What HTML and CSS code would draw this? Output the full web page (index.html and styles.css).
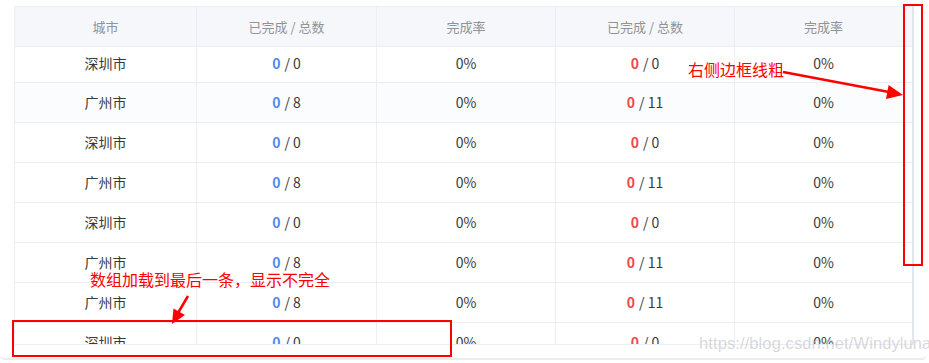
FILE: index.html
```html
<!DOCTYPE html>
<html lang="zh">
<head>
<meta charset="utf-8">
<link rel="stylesheet" href="styles.css">
</head>
<body>
<div class="card">
  <div class="table-wrap">
    <div class="grid">
      <div class="th">城市</div><div class="th">已完成 / 总数</div><div class="th">完成率</div><div class="th">已完成 / 总数</div><div class="th last">完成率</div>

      <div class="td r1">深圳市</div><div class="td r1"><b class="blue">0</b> / 0</div><div class="td r1">0%</div><div class="td r1"><b class="red">0</b> / 0</div><div class="td r1 last">0%</div>

      <div class="td hover">广州市</div><div class="td hover"><b class="blue">0</b> / 8</div><div class="td hover">0%</div><div class="td hover"><b class="red">0</b> / 11</div><div class="td hover last">0%</div>

      <div class="td">深圳市</div><div class="td"><b class="blue">0</b> / 0</div><div class="td">0%</div><div class="td"><b class="red">0</b> / 0</div><div class="td last">0%</div>

      <div class="td">广州市</div><div class="td"><b class="blue">0</b> / 8</div><div class="td">0%</div><div class="td"><b class="red">0</b> / 11</div><div class="td last">0%</div>

      <div class="td">深圳市</div><div class="td"><b class="blue">0</b> / 0</div><div class="td">0%</div><div class="td"><b class="red">0</b> / 0</div><div class="td last">0%</div>

      <div class="td">广州市</div><div class="td"><b class="blue">0</b> / 8</div><div class="td">0%</div><div class="td"><b class="red">0</b> / 11</div><div class="td last">0%</div>

      <div class="td">广州市</div><div class="td"><b class="blue">0</b> / 8</div><div class="td">0%</div><div class="td"><b class="red">0</b> / 11</div><div class="td last">0%</div>

      <div class="td">深圳市</div><div class="td"><b class="blue">0</b> / 0</div><div class="td">0%</div><div class="td"><b class="red">0</b> / 0</div><div class="td last">0%</div>
    </div>
  </div>
</div>

<div class="watermark">https://blog.csdn.net/Windyluna</div>

<div class="note note-right">右侧边框线粗</div>
<div class="note note-bottom">数组加载到最后一条，显示不完全</div>
<div class="mark mark-right"></div>
<div class="mark mark-bottom"></div>

<svg class="arrows" width="929" height="363" viewBox="0 0 929 363">
  <line x1="783" y1="72" x2="889" y2="92" stroke="#f00" stroke-width="2.5"/>
  <polygon points="903,95 886,99 888.6,85" fill="#f00"/>
  <line x1="188" y1="296" x2="178" y2="313" stroke="#f00" stroke-width="2.5"/>
  <polygon points="172,324 185,315 173.5,308.5" fill="#f00"/>
</svg>
</body>
</html>
```

FILE: styles.css
```css
html, body {
  margin: 0;
  padding: 0;
  background: #fff;
}

body {
  width: 929px;
  height: 363px;
  overflow: hidden;
  position: relative;
  font-family: "Microsoft YaHei", "Noto Sans CJK SC", sans-serif;
}

.card {
  width: 927px;
  height: 360px;
  box-sizing: border-box;
  padding: 6px 0 0 14px;
  border-bottom: 2px solid #ececef;
  border-radius: 0 0 5px 5px;
}

.table-wrap {
  width: 900px;
  height: 339px;
  box-sizing: border-box;
  border: 1px solid #ebeef5;
  border-right: 2px solid #e4e6ee;
  overflow: hidden;
}

.grid {
  display: grid;
  grid-template-columns: 182px 180px 179px 179px 177px;
  grid-template-rows: 40px 36px;
  grid-auto-rows: 40px;
}

.th, .td {
  box-sizing: border-box;
  border-right: 1px solid #ebeef5;
  border-bottom: 1px solid #ebeef5;
  display: flex;
  align-items: center;
  justify-content: center;
  white-space: nowrap;
}

.th {
  background: #f5f7fa;
  color: #909399;
  font-size: 13px;
  padding-bottom: 1px;
}

.td {
  font-size: 14px;
  color: #3a3a3a;
  padding-bottom: 1px;
}

.td.r1 {
  padding-bottom: 3px;
}

.td.hover {
  background: #fbfcfd;
}

.last {
  border-right: none;
}

.td b {
  font-weight: 700;
  margin-right: 4px;
}

.blue {
  color: #4f8ce8;
}

.red {
  color: #f0474f;
}

.watermark {
  position: absolute;
  left: 699px;
  top: 334px;
  font-family: "Liberation Sans", Arial, sans-serif;
  font-size: 16.5px;
  color: rgba(190, 190, 195, 0.6);
  letter-spacing: 0.1px;
}

.note {
  position: absolute;
  font-family: "Noto Sans CJK SC", "Microsoft YaHei", sans-serif;
  font-size: 16px;
  line-height: 20px;
  color: #f00;
  white-space: nowrap;
}

.note-right {
  left: 688px;
  top: 59px;
}

.note-bottom {
  left: 90px;
  top: 269px;
}

.mark {
  position: absolute;
  box-sizing: border-box;
  border: 2px solid #f00;
}

.mark-right {
  left: 903px;
  top: 4px;
  width: 20px;
  height: 262px;
}

.mark-bottom {
  left: 12px;
  top: 320px;
  width: 440px;
  height: 37px;
}

.arrows {
  position: absolute;
  left: 0;
  top: 0;
  pointer-events: none;
}
```
